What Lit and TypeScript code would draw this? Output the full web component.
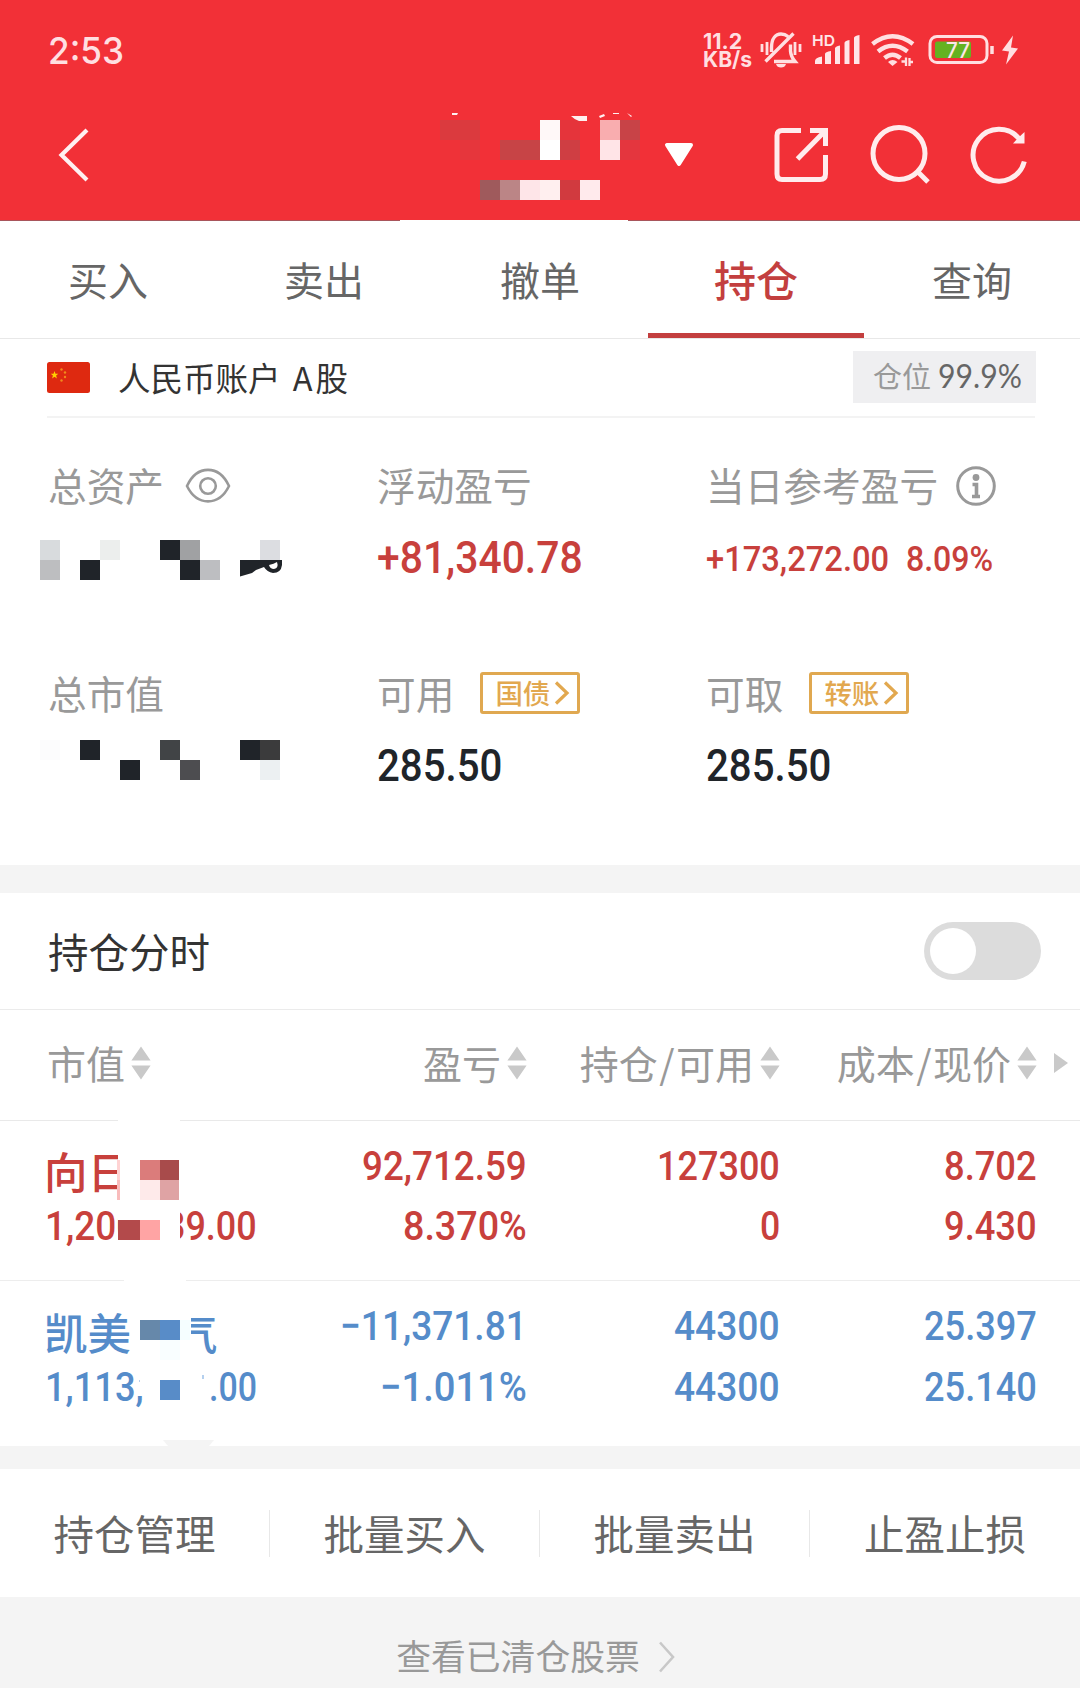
import { LitElement, html, css, svg } from "lit";
import { customElement, property } from "lit/decorators.js";

/** Single line of text stretched horizontally to an exact width. */
@customElement("fit-text")
class FitText extends LitElement {
  @property() text = "";
  @property({ type: Number }) w = 100;
  static styles = css`
    :host { display: block; flex: none; white-space: nowrap; }
    .box { display: block; }
    .ink { display: inline-block; transform-origin: 0 50%; }
  `;
  updated() {
    const ink = this.renderRoot.querySelector(".ink") as HTMLElement;
    ink.style.transform = `scaleX(${this.w / ink.offsetWidth})`;
  }
  render() {
    return html`<span class="box" style="width:${this.w}px"><span class="ink">${this.text}</span></span>`;
  }
}

type Cell = [number, number, string, number?, number?];
const rects = (cells: Cell[]) =>
  cells.map(([x, y, c, w = 20, h = 20]) => svg`<rect x=${x} y=${y} width=${w} height=${h} fill=${c}></rect>`);

const titleCells: Cell[] = [
  [0, 10, "#db3a3e", 40], [0, 30, "#ef3238"], [20, 30, "#e6363c"], [60, 30, "#c74446", 40],
  [100, 10, "#fff8f8"], [100, 30, "#ffffff"], [120, 10, "#e5343b"], [120, 30, "#cf3e43"],
  [160, 10, "#f9adaf"], [160, 30, "#ffe4e7"], [180, 10, "#c84347"], [180, 30, "#e4363e"],
  [40, 70, "#9f5a5c"], [60, 70, "#bb8586"], [80, 70, "#fee5e8"], [100, 70, "#ffefef"],
  [120, 70, "#d13a3f"], [140, 70, "#ffeaec"],
];
const assetCells: Cell[] = [
  [0, 0, "#d8dbdd"], [0, 20, "#bdbec0"], [40, 20, "#202429"], [60, 0, "#eceeed"],
  [120, 0, "#202429"], [140, 0, "#a0a1a3"], [140, 20, "#202429"], [160, 20, "#bdbec1"], [220, 0, "#dcdde1"],
];
const marketCells: Cell[] = [
  [0, 0, "#fcfcfd"], [40, 0, "#202429"], [80, 20, "#202429"], [120, 0, "#414446"], [140, 20, "#4d4d50"],
  [200, 0, "#202429"], [220, 0, "#3b3b3c"], [220, 20, "#ecf0f2"],
];
const maskOne: Cell[] = [
  [118, 0, "#ffffff", 62, 2], [118, 26, "#ffffff", 70, 60], [118, 90, "#ffffff", 62, 34],
  [117, 41, "#ffd3d3", 3], [117, 61, "#f9bcbc", 3], [140, 41, "#db7c7b"], [160, 41, "#a84b4b", 19],
  [140, 61, "#feeaea"], [160, 61, "#dfa3a4", 19], [118, 101, "#b34a4b", 22], [140, 101, "#ffa4a4"],
];
const maskTwo: Cell[] = [
  [124, 0, "#ffffff", 62, 2], [131, 30, "#ffffff", 60, 50], [140, 41, "#6688aa"], [160, 41, "#588cc8"],
  [180, 41, "#f5feff", 10], [160, 61, "#f9feff"], [160, 101, "#588cc8"],
  [202, 96, "#b5d0ee", 2, 4], [139, 101, "#b5d0ee", 1, 2],
];

interface Holding {
  tone: string;
  head: unknown;
  value: unknown;
  mask: unknown;
  cols: [string, number, string, number][];
}
const holdings: Holding[] = [
  {
    tone: "up",
    head: html`<span>向日</span>`,
    value: html`<fit-text text="1,200" w="92"></fit-text><fit-text text="39.00" w="92"></fit-text>`,
    mask: svg`${rects(maskOne)}`,
    cols: [["92,712.59", 165, "8.370%", 124], ["127300", 123, "0", 20], ["8.702", 93, "9.430", 93]],
  },
  {
    tone: "down",
    head: html`<span>凯美</span><span class="tail">气</span>`,
    value: html`<fit-text text="1,113," w="99"></fit-text><fit-text text=".00" w="48"></fit-text>`,
    mask: svg`${rects(maskTwo)}`,
    cols: [["−11,371.81", 187, "−1.011%", 147], ["44300", 106, "44300", 106], ["25.397", 113, "25.140", 113]],
  },
];

const sorter = html`<svg class="sorter" width="20" height="34" viewBox="0 0 20 34">
  <path d="M10 0.5L19.6 14.5H.4zM10 33.5L19.6 19.5H.4z" fill="#c9c9c9"/></svg>`;

@customElement("app-root")
class AppRoot extends LitElement {
  static styles = css`
    :host { display: block; width: 1080px; height: 1688px; overflow: hidden; background: #fff;
      font-family: "Noto Sans CJK SC", sans-serif; color: #333; }
    * { box-sizing: border-box; }
    svg { display: block; flex: none; }
    fit-text { font-family: Roboto, sans-serif; font-weight: 500; }
    .top { height: 221px; background: #f23037; border-bottom: 1px solid #a8555b; position: relative; }
    .gap { position: absolute; left: 400px; top: 220px; width: 228px; height: 1px; background: #fff; }
    .status { height: 100px; display: flex; align-items: center; padding: 0 58px 0 48px; color: #ffdfe1; }
    .clock { font-family: Inter, sans-serif; font-size: 37px; line-height: 44px; font-weight: 500; flex: 1; padding-top: 1px; }
    .speed { font-family: Inter, sans-serif; font-weight: 700; font-size: 21.5px; line-height: 18.5px; }
    .nav { height: 120px; display: flex; align-items: flex-start; }
    .back { margin: 27px 0 0 56px; }
    .title { margin: 10px 0 0 350px; }
    .drop { margin: 42px 0 0 24px; }
    .acts { margin: 22px 0 0 76px; }
    .tabs { height: 118px; display: grid; grid-template-columns: repeat(5, 1fr); border-bottom: 1px solid #e8e8e8; }
    .tab { font-size: 40px; line-height: 117px; height: 117px; color: #666; text-align: center; }
    .on { font-size: 42px; line-height: 115px; color: #c33f3f; border-bottom: 5px solid #c33f3f; font-weight: 500; }
    .account { margin: 0 45px 0 47px; height: 79px; border-bottom: 2px solid #f3f3f3; display: flex; align-items: flex-start; }
    .flag { margin-top: 23px; }
    .kind { font-size: 32.5px; line-height: 48px; margin: 14px auto 0 28px; word-spacing: 5px; }
    .kind b { font-weight: 400; margin-right: 3px; }
    .ratio { margin: 12px -1px 0 0; width: 183px; height: 52px; background: #efeff1; display: flex; align-items: center; padding-left: 20px; }
    .ratio .lab { font-size: 29px; line-height: 48px; color: #999; width: 65px; padding-bottom: 4px; }
    .ratio fit-text { font-family: Lato, sans-serif; font-weight: 400; font-size: 32px; color: #666; line-height: 44px; padding-bottom: 3px; }
    .sums { height: 447px; padding: 32px 0 0 48px; display: grid; grid-template-columns: 329px 329px 1fr; grid-template-rows: 208px 200px; }
    .lab { white-space: nowrap; }
    .cap { display: flex; align-items: center; height: 70px; font-size: 38.7px; line-height: 68px; color: #999; }
    .cap span, .plain { margin-top: -2px; }
    .cap svg { margin-top: 2px; }
    .num { font-size: 45px; line-height: 50px; margin-top: 12px; color: #202429; }
    .red { color: #c8403c; margin-top: 13px; }
    .pair { display: flex; gap: 17px; font-size: 35px; margin-top: 15px; }
    .mosaic { margin: 20px 0 0 -8px; overflow: visible; }
    .mosaic.low { margin-top: 11px; }
    .cap.low { margin-top: 1px; }
    .cap.low span { margin-top: -4px; }
    .link { margin: -2px 0 0 26px; width: 100px; height: 42px; border: 3px solid #e0a850; border-radius: 3px; display: flex; align-items: center; padding-left: 12px; font-size: 27.5px; line-height: 36px; color: #e2a84f; font-weight: 500; }
    .link svg { margin: 0 0 0 4px; }
    .cap .link span { margin-top: -3px; }
    .band { height: 28px; background: #f4f4f4; }
    .switch { height: 117px; border-bottom: 1px solid #ebebeb; display: flex; align-items: center; justify-content: space-between; padding: 0 39px 2px 48px; font-size: 40.5px; }
    .knob { width: 117px; height: 58px; border-radius: 29px; background: #dcdcdc; padding: 6px; margin-top: 1px; }
    .knob i { display: block; width: 46px; height: 46px; border-radius: 50%; background: #fff; }
    .grid { display: grid; grid-template-columns: 230px 252px 253px 257px 1fr; padding-left: 45px; }
    .heads { height: 111px; border-bottom: 1px solid #e9e9e9; align-items: center; font-size: 39px; color: #999; line-height: 58px; }
    .heads > div { display: flex; align-items: center; justify-content: flex-end; gap: 6px; white-space: nowrap; padding-bottom: 4px; }
    .heads > div > span { margin-top: -2px; }
    .heads i { font-style: normal; margin: 0 1.5px; }
    .heads > .first { justify-content: flex-start; padding-left: 2px; }
    .heads > .more { justify-content: flex-start; padding-left: 17px; }
    .row { position: relative; height: 160px; border-bottom: 1px solid #ededed; grid-template-rows: 60px 60px; padding-top: 15px; align-content: start; }
    .row.down { height: 165px; border-bottom: 0; }
    .up { color: #c8403c; }
    .down { color: #558cca; }
    .row fit-text { font-size: 41px; line-height: 61px; }
    .down .val, .down .low { padding-top: 1px; }
    .name { font-size: 43.5px; line-height: 60px; font-weight: 500; padding-top: 5px; display: flex; height: 60px; white-space: nowrap; margin-left: -1px; }
    .down .name { padding-top: 6px; }
    .tail { margin-left: 43px; }
    .val { display: flex; justify-content: space-between; width: 212px; }
    .cell { display: flex; justify-content: flex-end; }
    .mask { position: absolute; left: 0; top: -1px; }
    .slim { height: 23px; position: relative; }
    .notch { position: absolute; left: 163px; top: -6px; }
    .tools { height: 128px; display: grid; grid-template-columns: repeat(4, 1fr); align-items: center; }
    .tool { height: 47px; line-height: 46px; font-size: 40.5px; color: #666; text-align: center; border-right: 1px solid #e8e8e8; white-space: nowrap; }
    .tool:last-child { border-right: 0; }
    .foot { height: 91px; background: #f4f4f4; display: flex; align-items: center; justify-content: center; gap: 18px; font-size: 34.8px; line-height: 50px; color: #999; padding: 28px 8px 0 0; }
    .foot span { margin-top: -4px; }
  `;

  status() {
    return html`<div class="status">
      <div class="clock"><fit-text class="clock" text="2:53" w="76"></fit-text></div>
      <div class="speed"><fit-text class="speed" text="11.2" w="39"></fit-text><fit-text class="speed" text="KB/s" w="49"></fit-text></div>
      <svg width="270" height="48" viewBox="754 26 270 48" fill="none" stroke="#ffdfe1" stroke-width="3.4">
        <path d="M773.5 52V48C773.5 38 778 34 783 34Q787 34 790 36.5M792.500 44.500V51Q793 57 797 61.500H776M767.500 61.500L795.500 33.500"/>
        <path d="M778 64H788Q787 67.500 783 67.500T778 64Z" fill="#ffdfe1" stroke="none"/>
        <path d="M764 44V52M769 42V55M797 42V55M802 44V52" stroke-width="2.8"/>
        <g fill="#ffe6e8" stroke="none"><path d="M817 61Q817 57.500 824 56.500V64H817zM827 54Q827 52 833 51V64H827zM837 48.500Q837 46.500 842 45.500V64H837zM846.500 43Q846.500 41 851.500 40V64H846.500zM856 38Q856 36 861.500 35V64H856z"/></g>
        <path d="M874.500 44Q894.500 28.500 915 44" stroke-width="4.5"/>
        <path d="M880 51.500Q894.500 40 909.500 51.500" stroke-width="4.5"/>
        <path d="M886.500 58Q894.500 51.500 902.500 58" stroke-width="4.5"/>
        <path d="M890 62Q894.500 58 899.500 62L894.500 66Z" fill="#ffdfe1" stroke="none"/>
        <path d="M903.500 61.500H908V66M908 57.500V66M911.500 66V58M911.500 62H915" stroke-width="2.3"/>
        <rect x="932" y="36.5" width="57" height="26" rx="7" stroke-width="3"/>
        <rect x="937" y="41.5" width="36" height="16.5" rx="2" fill="#65b221" stroke="none"/>
        <path d="M994 46V54" stroke-width="3.5"/>
        <path d="M1015 35.500L1004 50.500L1011 51.500L1008 64.500L1020 48.500L1013 47.500Z" fill="#ffdfe1" stroke="none"/>
        <g fill="#ffe6e8" stroke="none" font-family="Inter, sans-serif">
          <text x="814" y="46" font-size="15" font-weight="600" textLength="23" lengthAdjust="spacingAndGlyphs">HD</text>
          <text x="948" y="58" font-size="22" font-weight="500" textLength="24" lengthAdjust="spacingAndGlyphs">77</text>
        </g>
      </svg>
    </div>`;
  }

  render() {
    return html`
      <div class="top">
        ${this.status()}
        <div class="nav">
          <svg class="back" width="34" height="56" viewBox="0 0 34 56" fill="none" stroke="#fff0f1" stroke-width="4.2"><path d="M31 3L5.500 28L31 53"/></svg>
          <svg class="title" width="200" height="100" viewBox="0 0 200 100">
            ${rects(titleCells)}
            <path d="M12 3H18L17 5H12zM131 6H147V11H139Q135 10 131 6zM159 6L164 4L165 6L160 8zM173 3H179V4H173zM187 3L192 6L191 7z" fill="#fff0f0"/>
          </svg>
          <svg class="drop" width="30" height="26" viewBox="0 0 30 26"><path d="M3 3H27L15 22Z" fill="#fff" stroke="#fff" stroke-width="4" stroke-linejoin="round"/></svg>
          <svg class="acts" width="270" height="66" viewBox="770 122 270 66" fill="none" stroke="#ffeced" stroke-width="5">
            <path d="M801 130.500H782Q777 130.500 777 135.500V174Q777 179.500 782 179.500H820Q825.500 179.500 825.500 174V155M810 130.500H825.500V146M825.500 130.500L797.500 159"/>
            <circle cx="899" cy="153.500" r="26"/><path d="M918 172L928 182"/>
            <path d="M1024.300 161.500A26 26 0 1 1 1019 138.500"/><path d="M1024.500 132V143.500H1013L1018 138Z" fill="#ffeced" stroke="none"/>
          </svg>
        </div>
        <div class="gap"></div>
      </div>
      <div class="tabs">
        ${["买入", "卖出", "撤单", "持仓", "查询"].map((t) => html`<div class="tab ${t === "持仓" ? "on" : ""}">${t}</div>`)}
      </div>
      <div class="account">
        <svg class="flag" width="43" height="31" viewBox="0 0 43 31">
          <rect width="43" height="31" rx="2.5" fill="#de2910"/>
          <path d="M7.500 9L8.500 11.800H11.300L9.100 13.600L9.900 16.400L7.500 14.700L5.100 16.400L5.900 13.600L3.700 11.800H6.500Z" fill="#ffcf00"/>
          <g fill="#f08a1c"><circle cx="14.5" cy="7.500" r="1.2"/><circle cx="18" cy="10.500" r="1.2"/><circle cx="18" cy="15" r="1.2"/><circle cx="14.5" cy="18.500" r="1.2"/></g>
        </svg>
        <span class="kind">人民币账户 <b>A</b>股</span>
        <div class="ratio"><span class="lab">仓位</span><fit-text text="99.9%" w="84"></fit-text></div>
      </div>
      <div class="sums">
        <div>
          <div class="cap"><span>总资产</span>
            <svg style="margin-left:21px" width="46" height="36" viewBox="0 0 46 36" fill="none" stroke="#999" stroke-width="2.6"><path d="M2 18C12 -3.500 34 -3.500 44 18C34 38.500 12 38.500 2 18Z"/><circle cx="23" cy="18" r="7.8"/></svg>
          </div>
          <svg class="mosaic" width="250" height="40" viewBox="0 0 250 40">${rects(assetCells)}
            <path d="M200 20H242V25Q241 33 233 33Q227 32 224 27L216 30L212 33L200 36.500Z" fill="#202429"/><path d="M229 25Q234 24 237 22Q239 28 234 29Q230 29 229 25Z" fill="#fff"/></svg>
        </div>
        <div><div class="cap"><span>浮动盈亏</span></div><div class="num red"><fit-text text="+81,340.78" w="206"></fit-text></div></div>
        <div>
          <div class="cap"><span>当日参考盈亏</span>
            <svg style="margin-left:18px" width="40" height="42" viewBox="0 0 40 42" fill="none" stroke="#999" stroke-width="3"><circle cx="20" cy="21" r="18.3"/><circle cx="20" cy="12.5" r="3.4" fill="#999" stroke="none"/><path d="M16.500 19.500H20.500V31M16 31.500H24" stroke-width="3.6"/></svg>
          </div>
          <div class="num red pair"><fit-text text="+173,272.00" w="183"></fit-text><fit-text text="8.09%" w="87"></fit-text></div>
        </div>
        <div><div class="cap low"><span>总市值</span></div><svg class="mosaic low" width="250" height="40" viewBox="0 0 250 40">${rects(marketCells)}</svg></div>
        ${[["可用", "国债"], ["可取", "转账"]].map(
          ([a, b]) => html`<div>
            <div class="cap low"><span>${a}</span>
              <div class="link"><span>${b}</span><svg width="16" height="24" viewBox="0 0 16 24" fill="none" stroke="#e2a84f" stroke-width="3.2"><path d="M2 1.500L13 12L2 22.500"/></svg></div>
            </div>
            <div class="num"><fit-text text="285.50" w="125"></fit-text></div>
          </div>`
        )}
      </div>
      <div class="band"></div>
      <div class="switch"><span>持仓分时</span><div class="knob"><i></i></div></div>
      <div class="grid heads">
        <div class="first"><span>市值</span>${sorter}</div>
        <div><span>盈亏</span>${sorter}</div>
        <div><span>持仓<i>/</i>可用</span>${sorter}</div>
        <div><span>成本<i>/</i>现价</span>${sorter}</div>
        <div class="more"><svg width="14" height="22" viewBox="0 0 14 22"><path d="M0 1L14 11L0 21Z" fill="#c9c9c9"/></svg></div>
      </div>
      ${holdings.map(
        (h) => html`<div class="grid row ${h.tone}">
          <div class="name">${h.head}</div>
          ${h.cols.map((c) => html`<div class="cell"><fit-text text=${c[0]} w=${c[1]}></fit-text></div>`)}
          <div></div>
          <div class="val">${h.value}</div>
          ${h.cols.map((c) => html`<div class="cell low"><fit-text text=${c[2]} w=${c[3]}></fit-text></div>`)}
          <svg class="mask" width="300" height="160" viewBox="0 1 300 160">${h.mask}</svg>
        </div>`
      )}
      <div class="band slim"><svg class="notch" width="52" height="6" viewBox="0 0 52 6"><path d="M0 0H51L46 6H5Z" fill="#f4f4f4"/></svg></div>
      <div class="tools">${["持仓管理", "批量买入", "批量卖出", "止盈止损"].map((t) => html`<div class="tool">${t}</div>`)}</div>
      <div class="foot"><span>查看已清仓股票</span><svg width="18" height="32" viewBox="0 0 18 32" fill="none" stroke="#c8c8c8" stroke-width="2.6"><path d="M2 1.500L15 16L2 30.500"/></svg></div>
    `;
  }
}
